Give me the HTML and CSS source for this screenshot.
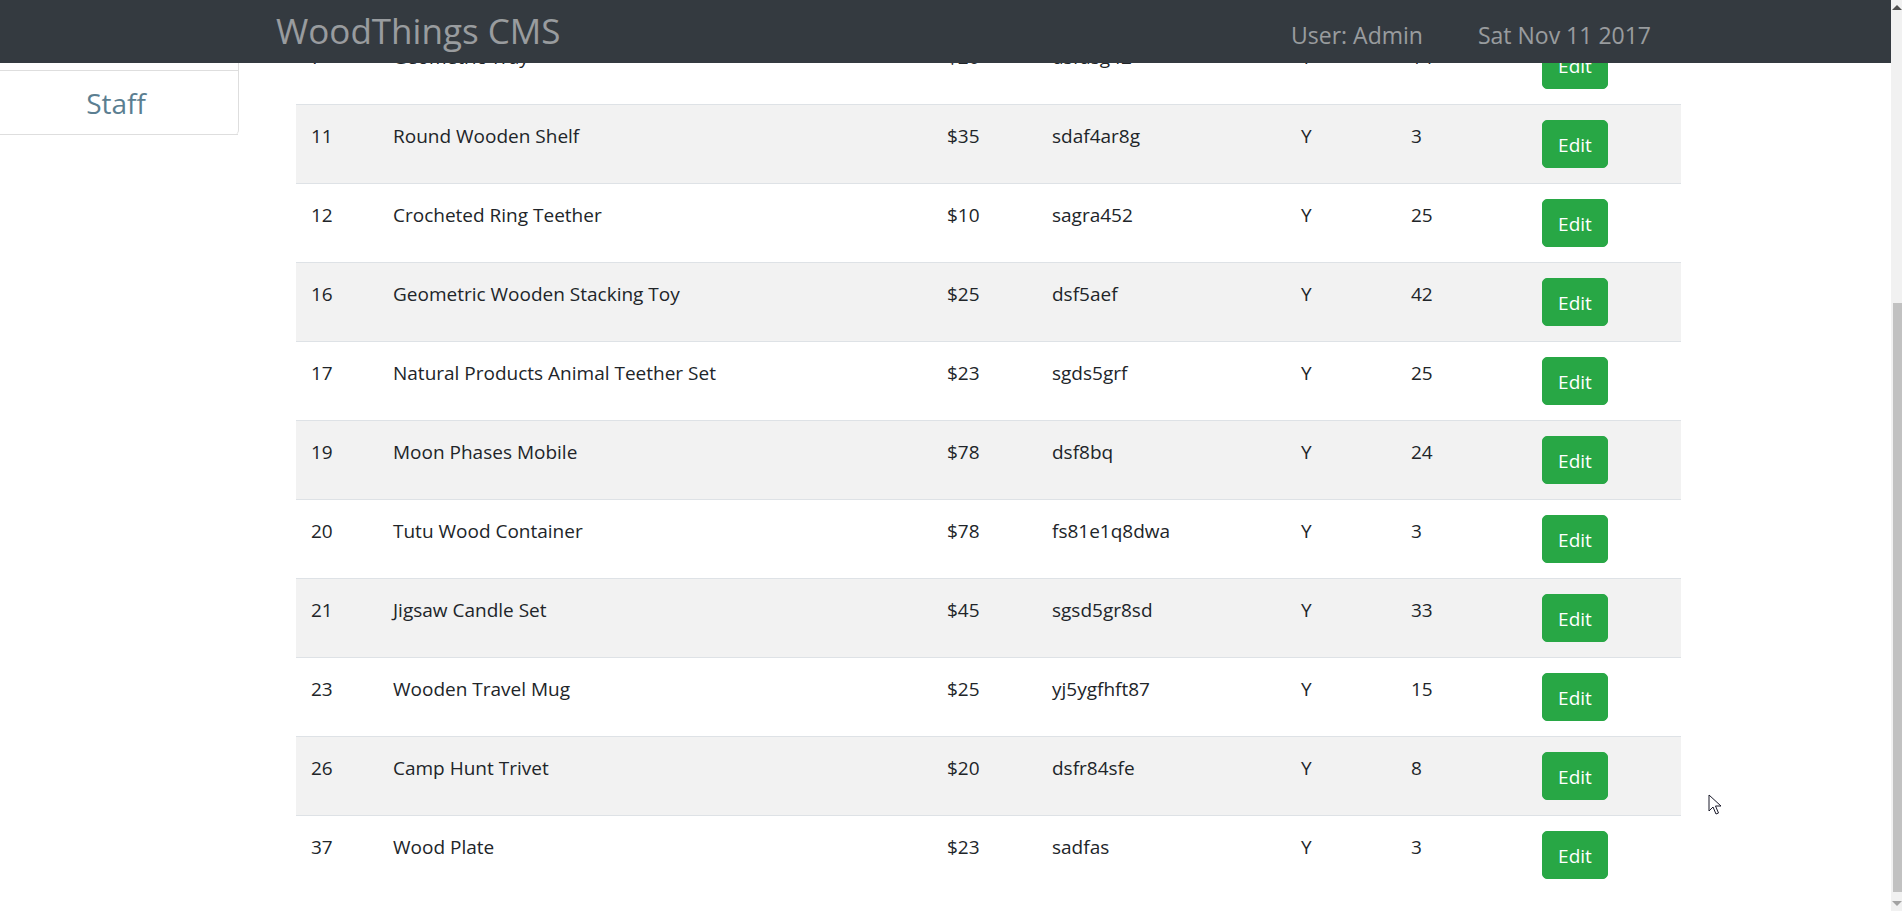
FILE: index.html
```html
<!DOCTYPE html>
<html lang="en">
<head>
<meta charset="utf-8">
<title>WoodThings CMS</title>
<link rel="stylesheet" href="styles.css">
</head>
<body>
<header class="navbar">
  <span class="brand">WoodThings CMS</span>
  <span class="nav-spacer"></span>
  <span class="nav-text nav-user">User: Admin</span>
  <span class="nav-text">Sat Nov 11 2017</span>
</header>

<div class="page">
  <aside class="sidebar">
    <ul class="side-list">
      <li class="side-item">Products</li>
      <li class="side-item">Staff</li>
    </ul>
  </aside>
  <main class="main">
    <table class="products">
      <colgroup>
        <col class="c-id"><col class="c-name"><col class="c-price"><col class="c-sku"><col class="c-avail"><col class="c-qty"><col class="c-act">
      </colgroup>
      <tbody>
        <tr><td>7</td><td>Geometric Tray</td><td>$20</td><td>dsfdsg42</td><td>Y</td><td>14</td><td class="act"><button class="btn-edit">Edit</button></td></tr>
        <tr class="striped"><td>11</td><td>Round Wooden Shelf</td><td>$35</td><td>sdaf4ar8g</td><td>Y</td><td>3</td><td class="act"><button class="btn-edit">Edit</button></td></tr>
        <tr><td>12</td><td>Crocheted Ring Teether</td><td>$10</td><td>sagra452</td><td>Y</td><td>25</td><td class="act"><button class="btn-edit">Edit</button></td></tr>
        <tr class="striped"><td>16</td><td>Geometric Wooden Stacking Toy</td><td>$25</td><td>dsf5aef</td><td>Y</td><td>42</td><td class="act"><button class="btn-edit">Edit</button></td></tr>
        <tr><td>17</td><td>Natural Products Animal Teether Set</td><td>$23</td><td>sgds5grf</td><td>Y</td><td>25</td><td class="act"><button class="btn-edit">Edit</button></td></tr>
        <tr class="striped"><td>19</td><td>Moon Phases Mobile</td><td>$78</td><td>dsf8bq</td><td>Y</td><td>24</td><td class="act"><button class="btn-edit">Edit</button></td></tr>
        <tr><td>20</td><td>Tutu Wood Container</td><td>$78</td><td>fs81e1q8dwa</td><td>Y</td><td>3</td><td class="act"><button class="btn-edit">Edit</button></td></tr>
        <tr class="striped"><td>21</td><td>Jigsaw Candle Set</td><td>$45</td><td>sgsd5gr8sd</td><td>Y</td><td>33</td><td class="act"><button class="btn-edit">Edit</button></td></tr>
        <tr><td>23</td><td>Wooden Travel Mug</td><td>$25</td><td>yj5ygfhft87</td><td>Y</td><td>15</td><td class="act"><button class="btn-edit">Edit</button></td></tr>
        <tr class="striped"><td>26</td><td>Camp Hunt Trivet</td><td>$20</td><td>dsfr84sfe</td><td>Y</td><td>8</td><td class="act"><button class="btn-edit">Edit</button></td></tr>
        <tr><td>37</td><td>Wood Plate</td><td>$23</td><td>sadfas</td><td>Y</td><td>3</td><td class="act"><button class="btn-edit">Edit</button></td></tr>
      </tbody>
    </table>
  </main>
</div>

<div class="scrollbar">
  <svg class="sb-up" width="11" height="16" viewBox="0 0 11 16"><polygon points="5,5 10,10 0,10" fill="#505050"/></svg>
  <div class="sb-thumb"></div>
  <svg class="sb-down" width="11" height="16" viewBox="0 0 11 16"><polygon points="0,6 10,6 5,11" fill="#a3a3a3"/></svg>
</div>

<svg class="cursor" width="14" height="22" viewBox="0 0 14 22">
  <path d="M1 1 L1 17 L5 13 L8 20 L10.5 19 L7.5 12 L13 12 Z" fill="#fff" stroke="#1a1a2a" stroke-width="1" stroke-linejoin="round"/>
</svg>
</body>
</html>
```

FILE: styles.css
```css
html, body {
  margin: 0;
  padding: 0;
  height: 911px;
  overflow: hidden;
  background: #fff;
}
body {
  font-family: "Open Sans", "Noto Sans", sans-serif;
  color: #212529;
}

.navbar {
  position: fixed;
  top: 0;
  left: 0;
  width: 1891px;
  height: 63px;
  background: #343a40;
  display: flex;
  align-items: center;
  box-sizing: border-box;
  padding: 0 240px 0 276px;
  z-index: 10;
}
.brand {
  font-size: 35px;
  color: rgba(255, 255, 255, 0.5);
  line-height: 1;
  margin-top: -2px;
}
.nav-spacer { flex: 1; }
.nav-text {
  font-size: 23px;
  color: rgba(255, 255, 255, 0.5);
  margin-top: 6px;
}
.nav-user { margin-right: 55px; }

.page {
  display: flex;
  align-items: flex-start;
}

.sidebar {
  width: 239px;
  flex: none;
}
.side-list {
  list-style: none;
  margin: 7px 0 0 0;
  padding: 0;
  border-right: 1px solid #dedede;
  border-bottom-right-radius: 5px;
}
.side-item {
  height: 63px;
  border-bottom: 1px solid #dedede;
  display: flex;
  align-items: center;
  justify-content: center;
  padding-right: 6px;
  font-size: 28px;
  color: #5b7e91;
}

.main {
  padding: 25px 0 0 57px;
}

.products {
  width: 1385px;
  border-collapse: collapse;
  table-layout: fixed;
  font-size: 19px;
  line-height: 30px;
}
.c-id { width: 82px; }
.c-name { width: 554px; }
.c-price { width: 105px; }
.c-sku { width: 249px; }
.c-avail { width: 110px; }
.c-qty { width: 131px; }
.c-act { width: 154px; }

.products td {
  padding: 16px 15px 14px;
  border-top: 1px solid #dee2e6;
  vertical-align: top;
  white-space: nowrap;
}
.products td.act {
  padding: 15px;
}
.products tr.striped { background: #f2f2f2; }

.btn-edit {
  display: block;
  width: 66px;
  height: 48px;
  padding: 0;
  border: 1px solid #28a745;
  border-radius: 5px;
  background: #28a745;
  color: #fff;
  font-family: "Open Sans", "Noto Sans", sans-serif;
  font-size: 19px;
  line-height: 48px;
  text-align: center;
}

.scrollbar {
  position: fixed;
  top: 0;
  right: 0;
  width: 11px;
  height: 911px;
  background: #f1f1f1;
}
.sb-up {
  position: absolute;
  top: 0;
  left: 1px;
}
.sb-thumb {
  position: absolute;
  top: 303px;
  left: 2px;
  width: 9px;
  height: 589px;
  background: #c1c1c1;
}
.sb-down {
  position: absolute;
  bottom: 0;
  left: 1px;
}

.cursor {
  position: fixed;
  left: 1708px;
  top: 794px;
  z-index: 20;
}
```
